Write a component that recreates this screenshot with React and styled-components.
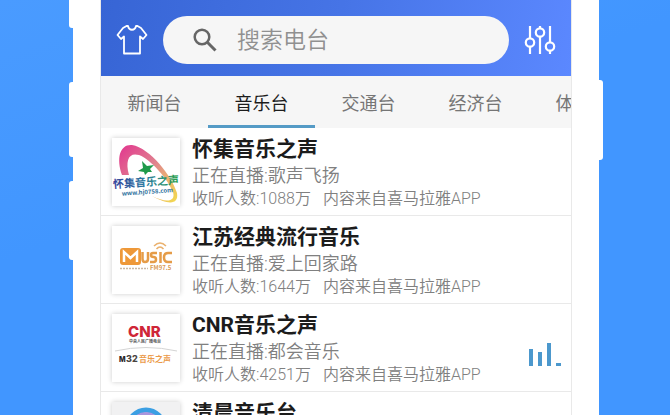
import React, { useState } from "react"
import styled, { createGlobalStyle, ThemeProvider } from "styled-components"

const theme = {
  sky: "#4196ff",
  accent: "#559bc6",
  panel: "#f6f6f6",
  line: "#e9e9e9",
  ink: "#1c1c1c",
  grey: "#808080",
}

const tabs = ["新闻台", "音乐台", "交通台", "经济台", "体育台"]

const stations = [
  { name: "怀集音乐之声", live: "歌声飞扬", count: "1088万", logo: HuaijiLogo },
  { name: "江苏经典流行音乐", live: "爱上回家路", count: "1644万", logo: MusicLogo },
  { name: "CNR音乐之声", live: "都会音乐", count: "4251万", logo: CnrLogo, playing: true },
  { name: "清晨音乐台", live: "清晨音乐", count: "3120万", logo: MorningLogo },
]

export default function App() {
  const [active, setActive] = useState("音乐台")
  return (
    <ThemeProvider theme={theme}>
      <GlobalStyle />
      <Page>
        <Rail>
          <SideKey $height={28} $gap={54} />
          <SideKey $height={75} $gap={24} />
          <SideKey $height={79} />
        </Rail>
        <Phone>
          <Screen>
            <Header>
              <IconButton aria-label="皮肤">
                <ShirtIcon />
              </IconButton>
              <SearchBox>
                <SearchIcon />
                <SearchInput aria-label="搜索电台" placeholder="搜索电台" />
              </SearchBox>
              <IconButton aria-label="设置">
                <SlidersIcon />
              </IconButton>
            </Header>
            <Tabs>
              {tabs.map(tab => (
                <Tab
                  key={tab}
                  $active={tab === active}
                  onClick={() => setActive(tab)}
                >
                  {tab}
                </Tab>
              ))}
            </Tabs>
            <List>
              {stations.map(station => (
                <Station key={station.name} {...station} />
              ))}
            </List>
          </Screen>
        </Phone>
        <Rail>
          <SideKey $offset={80} $height={80} $right />
        </Rail>
      </Page>
    </ThemeProvider>
  )
}

function Station({ name, live, count, logo: Logo, playing }) {
  return (
    <Row>
      <Thumb>
        <Logo />
      </Thumb>
      <Info>
        <Name>{name}</Name>
        <Live>正在直播:{live}</Live>
        <Meta>
          <span>收听人数:{count}</span>
          <span>内容来自喜马拉雅APP</span>
        </Meta>
      </Info>
      {playing && <PlayingBars />}
    </Row>
  )
}

function ShirtIcon() {
  return (
    <svg width="32" height="32" viewBox="0 0 32 32" fill="none" stroke="#fff" strokeWidth="1.800" strokeLinejoin="round">
      <path d="M10.500 2 L7 4 L1.500 11 L5 15 L8 12.500 V29.500 H24 V12.500 L27 15 L30.500 11 L25 4 L21.500 2 H20 C19 7 13 7 12 2 Z" />
    </svg>
  )
}

function SearchIcon() {
  return (
    <svg width="24" height="24" viewBox="0 0 24 24" fill="none" stroke="#666" strokeWidth="2.500">
      <circle cx="9" cy="9" r="7.300" />
      <path d="M14.300 14.300 L22.500 22.500" strokeWidth="3" />
    </svg>
  )
}

function SlidersIcon() {
  return (
    <svg width="32" height="32" viewBox="0 0 32 32" fill="none" stroke="#fff" strokeWidth="2.200">
      <path d="M6 2 V14 M6 23 V30 M16 2 V4 M16 13 V30 M26 2 V18 M26 27 V30" />
      <circle cx="6" cy="18.500" r="4.200" />
      <circle cx="16" cy="8.500" r="4.200" />
      <circle cx="26" cy="22.500" r="4.200" />
    </svg>
  )
}

function PlayingBars() {
  return (
    <svg width="34" height="38" viewBox="0 0 34 38" fill="#4c98cd">
      <path d="M1 20h4v17H1z M10 23h4v14h-4z M19 14h4v23h-4z M28 34h5v3h-5z" />
    </svg>
  )
}

function HuaijiLogo() {
  return (
    <svg width="68" height="68" viewBox="0 0 68 68">
      <defs>
        <linearGradient id="swoosh" x1="0" y1="0" x2="1" y2="1">
          <stop offset="0" stopColor="#e2358f" />
          <stop offset="0.450" stopColor="#e0808f" />
          <stop offset="0.650" stopColor="#e8a878" />
          <stop offset="1" stopColor="#f3dc4e" />
        </linearGradient>
        <linearGradient id="huaiji" x1="0" y1="0" x2="1" y2="0">
          <stop offset="0" stopColor="#35409a" />
          <stop offset="0.500" stopColor="#2b7ba0" />
          <stop offset="1" stopColor="#2aa04c" />
        </linearGradient>
      </defs>
      <path
        d="M10 37 C4 20 8 6 20 7 C38 10 60 38 65 55 C67 67 56 67 40 58 C54 65 64 64 61 54 C56 42 40 22 27 17 C17 14 13 22 17 37 Z"
        fill="url(#swoosh)"
      />
      <path d="M26 33 L31 30 L30 23 L35 28 L42 27 L38 31 L40 34 L36 34 L33 37 L32 34 Z" fill="#1f9a4a" />
      <g transform="rotate(-4 34 44)">
        <LogoText x="1" y="48" fontSize="11" fill="url(#huaiji)">怀集音乐之声</LogoText>
        <LogoText x="9" y="56" fontSize="6" fill="#2d6f9c">www.hj0758.com</LogoText>
      </g>
    </svg>
  )
}

function MusicLogo() {
  return (
    <svg width="68" height="68" viewBox="0 0 68 68">
      <rect x="8" y="22" width="21" height="17" rx="3" fill="#ee9838" />
      <path d="M12 36 V26 L18.500 32 L25 26 V36" fill="none" stroke="#fff" strokeWidth="2.500" />
      <g fill="none" stroke="#e59c48" strokeWidth="2.500">
        <path d="M30.500 26 V33 Q30.500 36 33 36 Q36 36 36 33 V26" />
        <path d="M45 27 H41 Q39 27 39 29 Q39 31 41.500 31 Q44 31 44 33.500 Q44 36 41.500 36 H38" />
        <path d="M48.500 26 V37 M60 27 H56 Q52 27 52 31.500 Q52 36 56 36 H60" />
      </g>
      <path d="M42 20 Q48 14 54 20 M44.500 23 Q48 19 51.500 23" fill="none" stroke="#eab16e" strokeWidth="1.500" />
      <LogoText x="38" y="44" fontSize="6" fill="#d99b57">FM97.5</LogoText>
      <path d="M8 42.500 H36" stroke="#c9b8a5" strokeWidth="1.500" strokeDasharray="2 1" />
    </svg>
  )
}

function CnrLogo() {
  return (
    <svg width="68" height="68" viewBox="0 0 68 68">
      <LogoText x="16" y="23" fontSize="15" fill="#cf2638" $latin>CNR</LogoText>
      <LogoText x="17" y="29" fontSize="4" fill="#555">中央人民广播电台</LogoText>
      <path d="M3 37 Q34 30 65 37" fill="none" stroke="#d4d4d4" />
      <LogoText x="7" y="48" fontSize="7" fill="#26211f" $latin>M</LogoText>
      <LogoText x="14" y="48" fontSize="9" fill="#4a443f" $latin>32</LogoText>
      <LogoText x="27" y="48" fontSize="8" fill="#eb9a49">音乐之声</LogoText>
    </svg>
  )
}

function MorningLogo() {
  return (
    <svg width="68" height="68" viewBox="0 0 68 68">
      <rect width="68" height="68" fill="#f1f1f2" />
      <circle cx="34" cy="26" r="18" fill="none" stroke="#3b9fe3" strokeWidth="5" />
      <circle cx="34" cy="26" r="14" fill="#e6e0f4" stroke="#a995dd" strokeWidth="4" />
    </svg>
  )
}

const GlobalStyle = createGlobalStyle`
  * {
    box-sizing: border-box;
  }

  body {
    margin: 0;
    font-family: Roboto, "Noto Sans CJK SC", sans-serif;
    color: ${theme.ink};
  }

  button,
  input {
    font-family: inherit;
    border: none;
    background: none;
    padding: 0;
    outline: none;
  }
`

const Page = styled.div`
  height: 100vh;
  padding: 0 67px 0 69px;
  display: flex;
  background: linear-gradient(160deg, #4a9bff, ${props => props.theme.sky} 40%);
`

const Rail = styled.div`
  flex: 0 0 4px;
  display: flex;
  flex-direction: column;
`

const SideKey = styled.div`
  flex: none;
  height: ${props => props.$height}px;
  margin-top: ${props => props.$offset || 0}px;
  margin-bottom: ${props => props.$gap || 0}px;
  background: white;
  border-radius: ${props => (props.$right ? "0 3px 3px 0" : "3px 0 0 3px")};

  &:first-child:not(:only-child) {
    border-top-left-radius: 0;
  }
`

const Phone = styled.main`
  flex: 1;
  min-width: 0;
  padding: 0 27px;
  background: white;
`

const Screen = styled.div`
  height: 100%;
  display: flex;
  flex-direction: column;
  border: solid ${props => props.theme.line};
  border-width: 0 1px;
`

const Header = styled.header`
  flex: none;
  height: 76px;
  padding: 4px 15px 0;
  display: flex;
  align-items: center;
  gap: 15px;
  background: linear-gradient(100deg, #3765d5, #4674e6 50%, #5b88ff);
`

const IconButton = styled.button`
  flex: none;
  display: flex;
`

const SearchBox = styled.label`
  flex: 1;
  min-width: 0;
  height: 48px;
  padding: 0 30px;
  display: flex;
  align-items: center;
  gap: 20px;
  border-radius: 24px;
  background: ${props => props.theme.panel};
`

const SearchInput = styled.input`
  flex: 1;
  min-width: 0;
  font-size: 23px;
  font-weight: 350;

  &::placeholder {
    color: #909090;
    opacity: 1;
  }
`

const Tabs = styled.nav`
  flex: none;
  height: 52px;
  display: flex;
  overflow: hidden;
  background: ${props => props.theme.panel};
`

const Tab = styled.button`
  flex: 0 0 107px;
  font-size: 18px;
  color: ${props => (props.$active ? props.theme.ink : "#757575")};
  border: solid transparent;
  border-width: 3px 0;
  border-bottom-color: ${props =>
    props.$active ? props.theme.accent : "transparent"};
`

const List = styled.ul`
  flex: 1;
  min-height: 0;
  margin: 0;
  padding: 0;
  list-style: none;
  overflow-y: auto;
  scrollbar-width: none;
`

const Row = styled.li`
  height: 88px;
  padding: 0 9px 0 11px;
  display: flex;
  align-items: center;
  gap: 12px;
  border-bottom: 1px solid ${props => props.theme.line};
`

const Thumb = styled.div`
  flex: none;
  display: flex;
  background: white;
  box-shadow: 0 0 5px rgba(0, 0, 0, 0.2);
`

const LogoText = styled.text`
  font-family: ${props => (props.$latin ? "Inter" : "Noto Sans CJK SC")},
    sans-serif;
  font-weight: ${props => (props.$latin ? 800 : 700)};
`

const Info = styled.div`
  flex: 1;
  min-width: 0;
  white-space: nowrap;
`

const Name = styled.h2`
  margin: 0;
  font-size: 21px;
  line-height: 26px;
`

const Live = styled.p`
  margin: 0;
  font-size: 18px;
  line-height: 28px;
  font-weight: 350;
  color: ${props => props.theme.grey};
`

const Meta = styled.p`
  margin: 0;
  display: flex;
  gap: 12px;
  font-size: 16px;
  line-height: 18px;
  font-weight: 350;
  color: ${props => props.theme.grey};
`
